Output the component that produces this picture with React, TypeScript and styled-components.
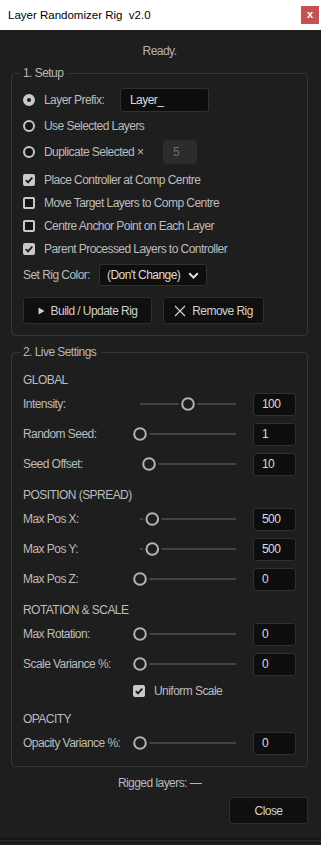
import React from "react";
import styled, { createGlobalStyle } from "styled-components";

const GlobalStyle = createGlobalStyle`
  html, body { margin: 0; padding: 0; background: #1e1e1e; }
  body {
    font-family: "Liberation Sans", Arial, sans-serif;
    font-size: 12px;
    letter-spacing: -0.55px;
    color: #b8b8b8;
  }
  * { box-sizing: border-box; }
`;

const Window = styled.div`
  width: 321px;
  min-height: 845px;
  display: flex;
  flex-direction: column;
  background: #1e1e1e;
`;

const TitleBar = styled.div`
  height: 30px;
  background: #ffffff;
  display: flex;
  align-items: center;
  justify-content: space-between;
  padding: 0 2px 0 8px;
`;

const TitleText = styled.div`
  color: #000;
  font-size: 11.5px;
  letter-spacing: 0;
  white-space: pre;
`;

const CloseX = styled.div`
  width: 18px;
  height: 18px;
  background: #c75050;
  color: #fff;
  font-weight: bold;
  font-size: 11px;
  letter-spacing: 0;
  display: flex;
  align-items: center;
  justify-content: center;
  line-height: 1;
  padding-bottom: 2px;
`;

const Body = styled.div`
  flex: 1;
  display: flex;
  flex-direction: column;
  padding: 0 13px 0 11px;
`;

const Status = styled.div`
  height: 36px;
  padding-top: 13px;
  line-height: 16px;
  text-align: center;
  color: #b4b4b4;
`;

const Group = styled.fieldset<{ $pt: number; $pb: number; $mt?: number }>`
  margin: ${(p) => p.$mt ?? 0}px 0 0 0;
  border: 1px solid #363636;
  border-radius: 4px;
  padding: ${(p) => p.$pt}px 11px ${(p) => p.$pb}px 11px;
  min-width: 0;
  display: flex;
  flex-direction: column;
`;

const Legend = styled.legend`
  margin-left: -3px;
  padding: 0 5px 0 3px;
  line-height: 15px;
  color: #b8b8b8;
`;

const Stack = styled.div<{ $mt?: number }>`
  display: flex;
  flex-direction: column;
  margin-top: ${(p) => p.$mt ?? 0}px;
`;

const OptionRow = styled.div<{ $h: number; $indent?: number }>`
  height: ${(p) => p.$h}px;
  display: flex;
  align-items: center;
  padding-left: ${(p) => p.$indent ?? 0}px;
  white-space: nowrap;
`;

const OptionLabel = styled.span<{ $w?: number }>`
  margin-left: 9px;
  color: #bcbcbc;
  ${(p) => (p.$w ? `width: ${p.$w}px; flex: none;` : "")}
`;

const FieldLabel = styled.span<{ $w: number }>`
  width: ${(p) => p.$w}px;
  flex: none;
  color: #bcbcbc;
`;

const Radio = styled.span<{ $on?: boolean }>`
  width: 12px;
  height: 12px;
  border-radius: 50%;
  flex: none;
  display: flex;
  align-items: center;
  justify-content: center;
  background: ${(p) => (p.$on ? "#c8c8c8" : "#151515")};
  border: 2px solid #c8c8c8;
  &::after {
    content: "";
    display: ${(p) => (p.$on ? "block" : "none")};
    width: 4px;
    height: 4px;
    border-radius: 50%;
    background: #1a1a1a;
  }
`;

const CheckBox = styled.span<{ $on?: boolean }>`
  width: 12px;
  height: 12px;
  border-radius: 2px;
  flex: none;
  display: flex;
  align-items: center;
  justify-content: center;
  background: ${(p) => (p.$on ? "#c8c8c8" : "#151515")};
  border: ${(p) => (p.$on ? "0" : "2px solid #c8c8c8")};
`;

const TextInput = styled.div<{ $w: number; $disabled?: boolean }>`
  width: ${(p) => p.$w}px;
  height: 24px;
  flex: none;
  border-radius: 3px;
  background: ${(p) => (p.$disabled ? "#2c2c2c" : "#0e0e0e")};
  border: 1px solid ${(p) => (p.$disabled ? "#2c2c2c" : "#303030")};
  color: ${(p) => (p.$disabled ? "#6e6e6e" : "#dcdcdc")};
  display: flex;
  align-items: center;
  padding-left: 9px;
`;

const Select = styled.div`
  width: 108px;
  height: 22px;
  flex: none;
  border-radius: 3px;
  background: #0e0e0e;
  border: 1px solid #303030;
  color: #dcdcdc;
  display: flex;
  align-items: center;
  justify-content: space-between;
  padding: 0 7px 0 7px;
`;

const ButtonRow = styled.div<{ $mt: number }>`
  display: flex;
  gap: 11px;
  margin-top: ${(p) => p.$mt}px;
`;

const Button = styled.div<{ $w: number }>`
  width: ${(p) => p.$w}px;
  height: 27px;
  border-radius: 3px;
  background: #0f0f0f;
  border: 1px solid #2e2e2e;
  color: #d0d0d0;
  display: flex;
  align-items: center;
  justify-content: center;
  gap: 6px;
  white-space: nowrap;
`;

const Heading = styled.div<{ $mt?: number }>`
  height: 18px;
  line-height: 18px;
  margin-top: ${(p) => p.$mt ?? 0}px;
  color: #bcbcbc;
`;

const SliderRow = styled.div`
  height: 30px;
  display: grid;
  grid-template-columns: 110px 110px 43px;
  align-items: center;
  white-space: nowrap;
  & > :last-child { margin-left: 10px; }
`;

const SliderLabel = styled.span`
  color: #bcbcbc;
`;

const NumInput = styled.div`
  width: 43px;
  height: 23px;
  border-radius: 3px;
  background: #0e0e0e;
  border: 1px solid #303030;
  color: #dcdcdc;
  display: flex;
  align-items: center;
  padding-left: 8px;
`;

const Rigged = styled.div`
  margin-top: 8px;
  line-height: 16px;
  text-align: center;
  color: #b8b8b8;
`;

const Footer = styled.div`
  display: flex;
  justify-content: flex-end;
  margin-top: 6px;
`;

const BottomEdge = styled.div`
  height: 8px;
  margin-top: 12px;
  border-top: 3px solid #181818;
  background: #1b1b1b;
  box-shadow: inset 0 1px 0 #2c2c2c;
`;

const Check = () => (
  <svg width="10" height="10" viewBox="0 0 10 10">
    <path d="M1.8 5.2 L4 7.4 L8.3 2.6" fill="none" stroke="#1a1a1a" strokeWidth="1.8" />
  </svg>
);

const Chevron = () => (
  <svg width="11" height="7" viewBox="0 0 11 7">
    <path d="M1.2 1.2 L5.5 5.5 L9.8 1.2" fill="none" stroke="#e0e0e0" strokeWidth="2" />
  </svg>
);

const Play = () => (
  <svg width="7" height="8" viewBox="0 0 7 8">
    <path d="M0.5 0.5 L6.5 4 L0.5 7.5 Z" fill="#d0d0d0" />
  </svg>
);

const Cross = () => (
  <svg width="12" height="12" viewBox="0 0 12 12">
    <path d="M1 1 L11 11 M11 1 L1 11" fill="none" stroke="#d0d0d0" strokeWidth="1.2" />
  </svg>
);

const Slider = ({ f }: { f: number }) => {
  const cx = 7 + f * 96;
  return (
    <svg width="110" height="20" viewBox="0 0 110 20">
      <line x1="7" y1="10" x2="103" y2="10" stroke="#505050" strokeWidth="1.6" />
      <circle cx={cx} cy="10" r="9.5" fill="#1e1e1e" />
      <circle cx={cx} cy="10" r="5.8" fill="none" stroke="#b4b4b4" strokeWidth="2" />
    </svg>
  );
};

type SRow = { label: string; f: number; v: string };

const SliderItem = ({ label, f, v }: SRow) => (
  <SliderRow>
    <SliderLabel>{label}</SliderLabel>
    <Slider f={f} />
    <NumInput>{v}</NumInput>
  </SliderRow>
);

export default function App() {
  return (
    <Window>
      <GlobalStyle />
      <TitleBar>
        <TitleText>Layer Randomizer Rig  v2.0</TitleText>
        <CloseX>x</CloseX>
      </TitleBar>
      <Body>
        <Status>Ready.</Status>
        <Group $pt={6} $pb={11}>
          <Legend>1. Setup</Legend>
          <Stack>
            <OptionRow $h={26}>
              <Radio $on />
              <OptionLabel $w={76}>Layer Prefix:</OptionLabel>
              <TextInput $w={89}>Layer_</TextInput>
            </OptionRow>
            <OptionRow $h={26}>
              <Radio />
              <OptionLabel>Use Selected Layers</OptionLabel>
            </OptionRow>
            <OptionRow $h={26}>
              <Radio />
              <OptionLabel $w={119}>Duplicate Selected ×</OptionLabel>
              <TextInput $w={34} $disabled>5</TextInput>
            </OptionRow>
          </Stack>
          <Stack $mt={3}>
            <OptionRow $h={23}>
              <CheckBox $on><Check /></CheckBox>
              <OptionLabel>Place Controller at Comp Centre</OptionLabel>
            </OptionRow>
            <OptionRow $h={23}>
              <CheckBox />
              <OptionLabel>Move Target Layers to Comp Centre</OptionLabel>
            </OptionRow>
            <OptionRow $h={23}>
              <CheckBox />
              <OptionLabel>Centre Anchor Point on Each Layer</OptionLabel>
            </OptionRow>
            <OptionRow $h={23}>
              <CheckBox $on><Check /></CheckBox>
              <OptionLabel>Parent Processed Layers to Controller</OptionLabel>
            </OptionRow>
          </Stack>
          <Stack $mt={3}>
            <OptionRow $h={24}>
              <FieldLabel $w={76}>Set Rig Color:</FieldLabel>
              <Select>
                <span>(Don't Change)</span>
                <Chevron />
              </Select>
            </OptionRow>
          </Stack>
          <ButtonRow $mt={10}>
            <Button $w={129}>
              <Play />
              <span>Build / Update Rig</span>
            </Button>
            <Button $w={101}>
              <Cross />
              <span>Remove Rig</span>
            </Button>
          </ButtonRow>
        </Group>
        <Group $pt={11} $pb={8} $mt={9}>
          <Legend>2. Live Settings</Legend>
          <Heading>GLOBAL</Heading>
          <SliderItem label="Intensity:" f={0.5} v="100" />
          <SliderItem label="Random Seed:" f={0} v="1" />
          <SliderItem label="Seed Offset:" f={0.094} v="10" />
          <Heading $mt={7}>POSITION (SPREAD)</Heading>
          <SliderItem label="Max Pos X:" f={0.128} v="500" />
          <SliderItem label="Max Pos Y:" f={0.128} v="500" />
          <SliderItem label="Max Pos Z:" f={0} v="0" />
          <Heading $mt={7}>ROTATION &amp; SCALE</Heading>
          <SliderItem label="Max Rotation:" f={0} v="0" />
          <SliderItem label="Scale Variance %:" f={0} v="0" />
          <OptionRow $h={24} $indent={110}>
            <CheckBox $on><Check /></CheckBox>
            <OptionLabel>Uniform Scale</OptionLabel>
          </OptionRow>
          <Heading $mt={7}>OPACITY</Heading>
          <SliderItem label="Opacity Variance %:" f={0} v="0" />
        </Group>
        <Rigged>Rigged layers: —</Rigged>
        <Footer>
          <Button $w={79}>Close</Button>
        </Footer>
      </Body>
      <BottomEdge />
    </Window>
  );
}
